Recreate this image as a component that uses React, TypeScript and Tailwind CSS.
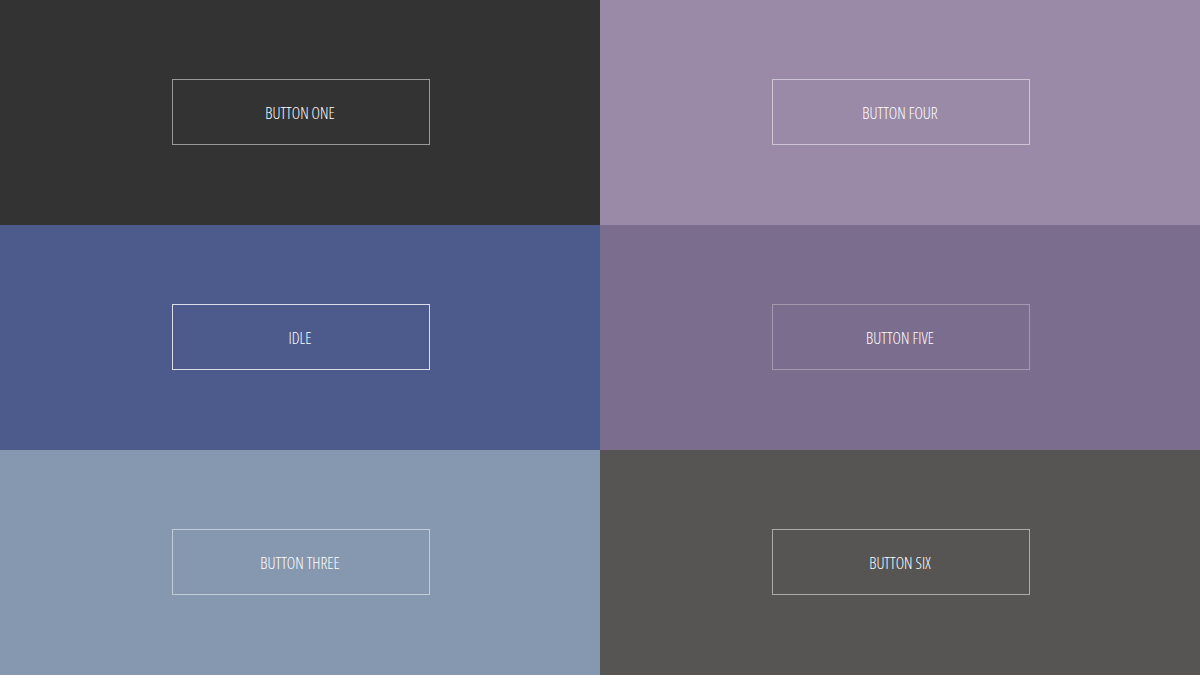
import React from 'react';

type Tile = { label: string; bg: string; border: string };

const tiles: Tile[] = [
  { label: 'BUTTON ONE', bg: 'bg-[#333333]', border: 'border-white/50' },
  { label: 'BUTTON FOUR', bg: 'bg-[#9a8aa8]', border: 'border-white/50' },
  { label: 'IDLE', bg: 'bg-[#4d5a8c]', border: 'border-white/80' },
  { label: 'BUTTON FIVE', bg: 'bg-[#7b6d8d]', border: 'border-white/30' },
  { label: 'BUTTON THREE', bg: 'bg-[#8598b0]', border: 'border-white/50' },
  { label: 'BUTTON SIX', bg: 'bg-[#565553]', border: 'border-white/50' },
];

const App = () => {
  return (
    <div className="grid grid-cols-2 w-[1200px]">
      {tiles.map((t) => (
        <div key={t.label} className={`${t.bg} h-[225px] flex items-center justify-center pl-[2px] pb-[1px]`}>
          <button
            className={`w-[258px] h-[66px] pr-[2px] pt-[2px] border ${t.border} text-white text-[16px] font-light font-stretch-condensed font-['Open_Sans',sans-serif]`}
          >
            {t.label}
          </button>
        </div>
      ))}
    </div>
  );
};

export default App;
